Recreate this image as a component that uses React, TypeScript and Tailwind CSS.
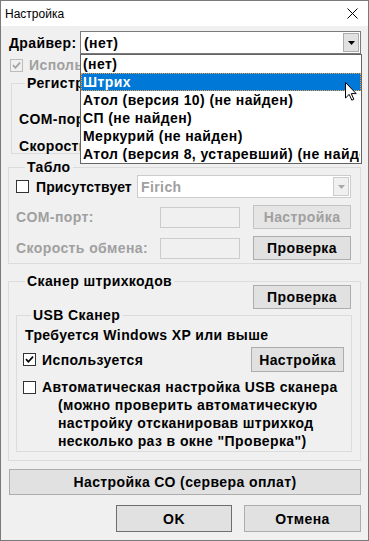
import clsx from 'clsx';

const Check = ({ checked, disabled }: { checked?: boolean; disabled?: boolean }) => (
    <span
        className={clsx(
            'w-[13px] h-[13px] border flex items-center justify-center shrink-0',
            disabled ? 'border-[#bcbcbc] bg-[#f0f0f0]' : 'border-[#333333] bg-white'
        )}
    >
        {checked && (
            <svg width="9" height="9" viewBox="0 0 9 9">
                <path d="M1 4.2 L3.4 6.8 L8 1.6" stroke={disabled ? '#a0a0a0' : '#000'} strokeWidth="1.7" fill="none" />
            </svg>
        )}
    </span>
);

const Arrow = ({ disabled }: { disabled?: boolean }) => (
    <svg width="7" height="4" viewBox="0 0 7 4">
        <path d="M0 0 H7 L3.5 4 Z" fill={disabled ? '#a8a8a8' : '#000'} />
    </svg>
);

const Btn = ({ children, disabled, className }: { children: React.ReactNode; disabled?: boolean; className?: string }) => (
    <div
        className={clsx(
            'flex items-center justify-center border',
            disabled ? 'bg-[#e5e5e5] border-[#c4c4c4] text-[#a0a0a0]' : 'bg-[#e1e1e1] border-[#adadad]',
            className
        )}
    >
        {children}
    </div>
);

const drivers = [
    '(нет)',
    'Штрих',
    'Атол (версия 10) (не найден)',
    'СП (не найден)',
    'Меркурий (не найден)',
    'Атол (версия 8, устаревший) (не найден)',
];

export default function App() {
    return (
        <div className="w-[369px] h-[541px] bg-[#f0f0f0] border border-[#7a7a7a] flex flex-col overflow-hidden font-['Liberation_Sans',Arial,sans-serif] text-[14px] leading-[16px] tracking-[0.4px] font-bold text-black">
            {/* TITLE BAR */}
            <div className="h-[25px] shrink-0 bg-white flex items-center justify-between pl-[4px] pr-[10px] font-normal text-[12px] tracking-normal">
                <span>Настройка</span>
                <svg width="11" height="11" viewBox="0 0 11 11">
                    <path d="M0.5 0.5 L10.5 10.5 M10.5 0.5 L0.5 10.5" stroke="#000" strokeWidth="1" />
                </svg>
            </div>

            <div className="flex-1 flex flex-col px-[7px]">
                {/* DRIVER */}
                <div className="mt-[5px] flex items-center h-[23px] relative z-10">
                    <span className="w-[72px] pl-[1px]">Драйвер:</span>
                    <div className="relative flex-1 h-[23px] bg-white border border-[#7a7a7a] flex items-center pl-[3px]">
                        <span>(нет)</span>
                        <div className="absolute right-[1px] top-[1px] bottom-[1px] w-[16px] bg-[#e1e1e1] border border-[#adadad] flex items-center justify-center">
                            <Arrow />
                        </div>
                        {/* OPEN LIST */}
                        <div className="absolute left-[-1px] top-[22px] w-[282px] bg-white border border-[#646464] flex flex-col">
                            {drivers.map((d, i) => (
                                <div
                                    key={d}
                                    className={clsx(
                                        'h-[18px] leading-[17px] pl-[1px] whitespace-nowrap overflow-hidden',
                                        i === 1 ? 'bg-[#0078d7] text-white border border-dotted border-[#f2a240]' : 'border border-transparent'
                                    )}
                                >
                                    {d}
                                </div>
                            ))}
                            <svg className="absolute left-[264px] top-[27px]" width="12" height="19" viewBox="0 0 12 19">
                                <path d="M0.5 0.5 V16 L4.2 12.4 L6.8 18.2 L8.8 17.3 L6.3 11.6 H11.2 Z" fill="#fff" stroke="#000" strokeWidth="1" strokeLinejoin="round" />
                            </svg>
                        </div>
                    </div>
                </div>

                {/* HIDDEN BEHIND LIST */}
                <div className="mt-[3px] h-[16px] flex items-center gap-[6px] ml-[2px] text-[#a0a0a0]">
                    <Check checked disabled />
                    <span>Используется</span>
                </div>
                <fieldset className="mt-[2px] ml-[3px] h-[79px] border border-[#dcdcdc] px-[7px]">
                    <legend className="ml-[6px] px-[2px]">Регистратор</legend>
                    <div className="mt-[20px]">COM-порт:</div>
                    <div className="mt-[11px]">Скорость обмена:</div>
                </fieldset>

                {/* TABLO */}
                <fieldset className="mt-[5px] border border-[#dcdcdc] pl-[7px] pr-[9px] pb-[3px]">
                    <legend className="ml-[9px] px-[2px]">Табло</legend>
                    <div className="flex items-center h-[23px]">
                        <Check />
                        <span className="ml-[7px] tracking-[0.1px]">Присутствует</span>
                        <div className="ml-auto w-[214px] h-[23px] bg-white border border-[#cccccc] flex items-center pl-[3px] text-[#a0a0a0] relative">
                            <span>Firich</span>
                            <div className="absolute right-[1px] top-[1px] bottom-[1px] w-[16px] bg-[#f0f0f0] border border-[#cccccc] flex items-center justify-center">
                                <Arrow disabled />
                            </div>
                        </div>
                    </div>
                    <div className="mt-[7px] flex items-center h-[24px] text-[#a0a0a0]">
                        <span>COM-порт:</span>
                        <div className="ml-auto w-[80px] h-[21px] border border-[#cccccc]" />
                        <Btn disabled className="ml-[13px] w-[98px] h-[24px]">Настройка</Btn>
                    </div>
                    <div className="mt-[7px] flex items-center h-[24px]">
                        <span className="text-[#a0a0a0]">Скорость обмена:</span>
                        <div className="ml-auto w-[80px] h-[21px] border border-[#cccccc]" />
                        <Btn className="ml-[13px] w-[98px] h-[24px]">Проверка</Btn>
                    </div>
                </fieldset>

                {/* SCANNER */}
                <fieldset className="mt-[9px] border border-[#dcdcdc] pl-[7px] pr-[8px] pb-[8px]">
                    <legend className="ml-[9px] px-[2px]">Сканер штрихкодов</legend>
                    <div className="flex justify-end pr-[1px]">
                        <Btn className="-mt-[4px] w-[98px] h-[24px]">Проверка</Btn>
                    </div>
                    <fieldset className="-mt-[2px] border border-[#dcdcdc] pl-[6px] pr-[7px] pb-[1px]">
                        <legend className="ml-[8px] px-[2px]">USB Сканер</legend>
                        <div className="mt-[4px] ml-[2px]">Требуется Windows XP или выше</div>
                        <div className="mt-[4px] flex items-center h-[25px]">
                            <Check checked />
                            <span className="ml-[6px]">Используется</span>
                            <Btn className="ml-auto w-[93px] h-[25px]">Настройка</Btn>
                        </div>
                        <div className="mt-[6px] flex items-start leading-[18px]">
                            <span className="mt-[3px]">
                                <Check />
                            </span>
                            <div className="ml-[6px] flex flex-col">
                                <span>Автоматическая настройка USB сканера</span>
                                <span className="pl-[16px]">(можно проверить автоматическую</span>
                                <span className="pl-[16px]">настройку отсканировав штрихкод</span>
                                <span className="pl-[16px]">несколько раз в окне "Проверка")</span>
                            </div>
                        </div>
                    </fieldset>
                </fieldset>

                {/* BOTTOM BUTTONS */}
                <Btn className="mt-[8px] ml-[1px] h-[26px]">Настройка СО (сервера оплат)</Btn>
                <div className="mt-[10px] flex justify-end gap-[12px]">
                    <Btn className="w-[116px] h-[27px] !border-[#6e6e6e]">OK</Btn>
                    <Btn className="w-[117px] h-[27px]">Отмена</Btn>
                </div>
            </div>
        </div>
    );
}
